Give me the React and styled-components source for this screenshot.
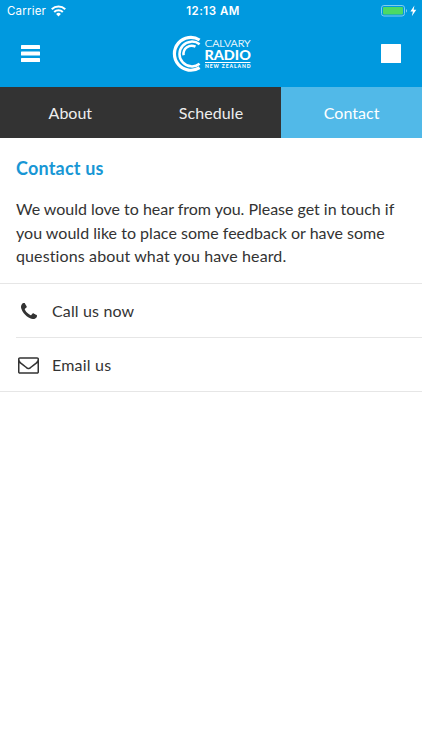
import React from "react";
import styled, { createGlobalStyle } from "styled-components";

const Global = createGlobalStyle`
  * { box-sizing: border-box; }
  html, body { margin: 0; background: #fff; }
  body { font-family: Lato, "Noto Sans", sans-serif; color: #333; }
  h1, p { margin: 0; }
  svg { display: block; }
`;

const Screen = styled.div`
  width: 100%;
  min-height: 750px;
  overflow: hidden;
  background: #fff;
`;
const Header = styled.header`
  height: 87px;
  background: #0099df;
  color: #fff;
`;
const StatusBar = styled.div`
  height: 22px;
  display: grid;
  grid-template-columns: 1fr auto 1fr;
  align-items: center;
  padding: 0 5px 0 7px;
  font-family: Inter, "Liberation Sans", sans-serif;
`;
const StatusGroup = styled.div`
  display: flex;
  align-items: center;
  gap: 5px;
  justify-content: ${(p) => (p.$end ? "flex-end" : "flex-start")};
`;
const Carrier = styled.span`
  font-size: 11.5px;
  letter-spacing: 0.2px;
`;
const Clock = styled.span`
  font-size: 11.5px;
  font-weight: 600;
  letter-spacing: 0.5px;
  padding-left: 2px;
`;
const NavBar = styled.div`
  height: 63px;
  display: grid;
  grid-template-columns: 1fr auto 1fr;
  align-items: center;
  padding: 0 21px;
`;
const IconButton = styled.button`
  padding: 0;
  border: 0;
  background: none;
  color: inherit;
  justify-self: ${(p) => (p.$end ? "end" : "start")};
`;
const Tabs = styled.nav`
  height: 51px;
  display: grid;
  grid-template-columns: repeat(3, 1fr);
  background: #333;
`;
const Tab = styled.a`
  display: flex;
  align-items: center;
  justify-content: center;
  color: ${(p) => (p.$active ? "#fff" : "#eee")};
  background: ${(p) => (p.$active ? "#51b9e8" : "transparent")};
  font-size: 16px;
  letter-spacing: ${(p) => p.$track}px;
`;
const Intro = styled.section`
  height: 146px;
  padding: 18px 16px 0;
  border-bottom: 1px solid #e6e6e6;
`;
const Title = styled.h1`
  font-size: 18px;
  line-height: 24px;
  font-weight: 700;
  color: #1897d5;
  letter-spacing: 0.2px;
`;
const Copy = styled.p`
  margin-top: 17px;
  font-size: 16px;
  line-height: 23.5px;
`;
const Line = styled.span`
  display: block;
  width: max-content;
  letter-spacing: ${(p) => p.$track}px;
`;
const Actions = styled.div`
  border-bottom: 1px solid #e6e6e6;
  padding-left: 16px;
`;
const Action = styled.a`
  height: ${(p) => (p.$last ? 53 : 54)}px;
  padding-bottom: 1px;
  display: flex;
  align-items: center;
  gap: 11px;
  font-size: 16px;
  letter-spacing: ${(p) => p.$track}px;
  border-bottom: ${(p) => (p.$last ? "0" : "1px solid #e6e6e6")};
`;
const IconSlot = styled.span`
  width: 25px;
  padding-top: 2px;
  display: flex;
  justify-content: center;
`;

const Wifi = () => (
  <svg width="15" height="12" viewBox="0 0 14 11" fill="none" stroke="#fff" strokeWidth="1.9">
    <path d="M.7 3.9a9 9 0 0 1 12.6 0M3 6.4a5.7 5.7 0 0 1 8 0" />
    <path d="M7 10.6 4.8 8.3a3.1 3.1 0 0 1 4.4 0z" fill="#fff" stroke="none" />
  </svg>
);
const Battery = () => (
  <svg width="36" height="12" viewBox="0 0 36 12">
    <rect x=".5" y=".5" width="23" height="10.5" rx="2.4" fill="none" stroke="#7fcdef" />
    <rect x="2" y="2" width="20" height="7.5" rx="1" fill="#4cd964" />
    <path d="M25 4v3.6c1.4-.5 1.4-3.1 0-3.6z" fill="#7fcdef" />
    <path d="M33.4.6 29.4 6.4h2.5l-1.1 4.8 4.5-6.4h-2.6z" fill="#fff" />
  </svg>
);
const Menu = () => (
  <svg width="19" height="17" viewBox="0 0 19 17" fill="#fff">
    <rect width="19" height="4" rx=".6" />
    <rect y="6.5" width="19" height="4" rx=".6" />
    <rect y="13" width="19" height="4" rx=".6" />
  </svg>
);
const Stop = () => (
  <svg width="20" height="19" viewBox="0 0 20 19"><rect width="20" height="19" rx=".5" fill="#fff" /></svg>
);
const Logo = () => (
  <svg width="80" height="37" viewBox="0 0 80 37" fill="#fff" fontFamily="Lato, sans-serif">
    <g fill="none" stroke="#fff">
      <path d="M28.6 5A16.4 16.4 0 1 0 28.6 32.7" strokeWidth="3.2" />
      <path d="M28.6 9.3A12.4 12.4 0 1 0 28.6 28.7" strokeWidth="2.5" />
      <path d="M24.5 11.7A8.2 8.2 0 0 0 12.6 20.2" strokeWidth="2.5" />
    </g>
    <text x="33.8" y="12.4" fontSize="10.2" fontWeight="300" stroke="#fff" strokeWidth=".2" textLength="45.8" lengthAdjust="spacingAndGlyphs">CALVARY</text>
    <text x="33.4" y="25.1" fontSize="14" fontWeight="900" textLength="46.4" lengthAdjust="spacingAndGlyphs">RADIO</text>
    <rect x="34" y="27" width="45.5" height="1" />
    <text x="34" y="33.3" fontSize="5" fontWeight="900" textLength="45.5">NEW ZEALAND</text>
  </svg>
);
const Phone = () => (
  <svg width="16" height="16" viewBox="0 0 1408 1408" fill="#333">
    <path d="M1408 1112q0 27-10 70.5t-21 68.5q-21 50-122 106-94 51-186 51-27 0-52.5-3.5t-57.5-12.5-47.5-14.5-55.5-20.5-49-18q-98-35-175-83-128-79-264.5-215.5t-215.5-264.5q-48-77-83-175-3-9-18-49t-20.5-55.5-14.5-47.5-12.5-57.5-3.5-52.5q0-92 51-186 56-101 106-122 25-11 68.5-21t70.5-10q14 0 21 3 18 6 53 76 11 19 30 54t35 63.5 31 53.5q3 4 17.5 25t21.5 35.5 7 28.5q0 20-28.5 50t-62 55-62 53-28.5 46q0 9 5 22.5t8.5 20.5 14 24 11.5 19q76 137 174 235t235 174q2 1 19 11.5t24 14 20.5 8.5 22.5 5q18 0 46-28.5t53-62 55-62 50-28.5q14 0 28.5 7t35.5 21.5 25 17.5q25 15 53.5 31t63.5 35 54 30q70 35 76 53 3 7 3 21z" />
  </svg>
);
const Envelope = () => (
  <svg width="21" height="17" viewBox="0 256 1792 1408" fill="#333">
    <path d="M1664 1504v-768q-32 36-69 66-268 206-426 338-51 43-83 67t-86.5 48.5-102.5 24.5h-2q-48 0-102.5-24.5t-86.5-48.5-83-67q-158-132-426-338-37-30-69-66v768q0 13 9.5 22.5t22.5 9.5h1472q13 0 22.5-9.5t9.5-22.5zm0-1051v-24.5l-.5-13-3-12.5-5.5-9-9-7.5-14-2.5h-1472q-13 0-22.5 9.5t-9.5 22.5q0 168 147 284 193 152 401 317 6 5 35 29.5t46 37.5 44.5 31.5 50.5 27.5 43 9h2q20 0 43-9t50.5-27.5 44.5-31.5 46-37.5 35-29.5q208-165 401-317 54-43 100.5-115.5t46.5-131.5zm128-37v1088q0 66-47 113t-113 47h-1472q-66 0-113-47t-47-113v-1088q0-66 47-113t113-47h1472q66 0 113 47t47 113z" />
  </svg>
);

export default function App() {
  return (
    <Screen>
      <Global />
      <Header>
        <StatusBar>
          <StatusGroup><Carrier>Carrier</Carrier><Wifi /></StatusGroup>
          <Clock>12:13 AM</Clock>
          <StatusGroup $end><Battery /></StatusGroup>
        </StatusBar>
        <NavBar>
          <IconButton aria-label="Menu"><Menu /></IconButton>
          <Logo />
          <IconButton $end aria-label="Stop"><Stop /></IconButton>
        </NavBar>
      </Header>
      <Tabs>
        <Tab $track={0}>About</Tab>
        <Tab $track={0.1}>Schedule</Tab>
        <Tab $track={0.05} $active>Contact</Tab>
      </Tabs>
      <Intro>
        <Title>Contact us</Title>
        <Copy>
          <Line $track={-0.02}>We would love to hear from you. Please get in touch if</Line>
          <Line $track={0.02}>you would like to place some feedback or have some</Line>
          <Line $track={0.12}>questions about what you have heard.</Line>
        </Copy>
      </Intro>
      <Actions>
        <Action $track={0.15}><IconSlot><Phone /></IconSlot>Call us now</Action>
        <Action $track={0.2} $last><IconSlot><Envelope /></IconSlot>Email us</Action>
      </Actions>
    </Screen>
  );
}
